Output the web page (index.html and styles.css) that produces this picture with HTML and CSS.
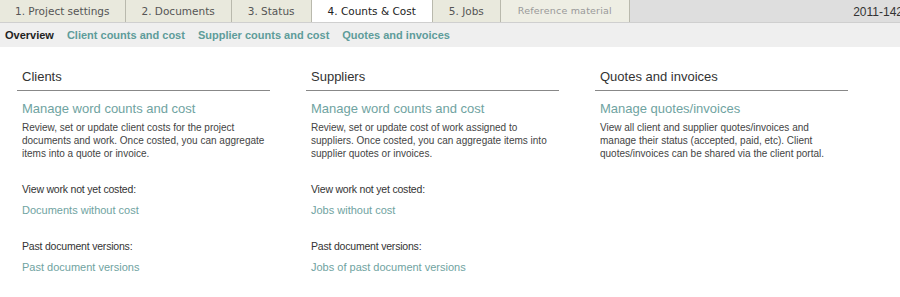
FILE: index.html
```html
<!DOCTYPE html>
<html lang="en">
<head>
    <meta charset="UTF-8">
    <title>Counts &amp; Cost</title>
    <link rel="stylesheet" href="styles.css">
</head>
<body>
    <header class="tabbar">
        <nav class="tabs">
            <a class="tab" href="#">1. Project settings</a>
            <a class="tab" href="#">2. Documents</a>
            <a class="tab" href="#">3. Status</a>
            <a class="tab active" href="#">4. Counts &amp; Cost</a>
            <a class="tab" href="#">5. Jobs</a>
            <a class="tab ref" href="#">Reference material</a>
        </nav>
        <span class="proj">2011-142</span>
    </header>

    <nav class="subnav">
        <a class="current" href="#">Overview</a>
        <a href="#">Client counts and cost</a>
        <a href="#">Supplier counts and cost</a>
        <a href="#">Quotes and invoices</a>
    </nav>

    <main class="cols">
        <section class="col">
            <h2>Clients</h2>
            <a class="big" href="#">Manage word counts and cost</a>
            <p class="desc">Review, set or update client costs for the project documents and work. Once costed, you can aggregate items into a quote or invoice.</p>
            <div class="label">View work not yet costed:</div>
            <a class="small" href="#">Documents without cost</a>
            <div class="label">Past document versions:</div>
            <a class="small" href="#">Past document versions</a>
        </section>

        <section class="col">
            <h2>Suppliers</h2>
            <a class="big" href="#">Manage word counts and cost</a>
            <p class="desc">Review, set or update cost of work assigned to suppliers. Once costed, you can aggregate items into supplier quotes or invoices.</p>
            <div class="label">View work not yet costed:</div>
            <a class="small" href="#">Jobs without cost</a>
            <div class="label">Past document versions:</div>
            <a class="small" href="#">Jobs of past document versions</a>
        </section>

        <section class="col">
            <h2>Quotes and invoices</h2>
            <a class="big" href="#">Manage quotes/invoices</a>
            <p class="desc narrow">View all client and supplier quotes/invoices and manage their status (accepted, paid, etc). Client quotes/invoices can be shared via the client portal.</p>
        </section>
    </main>
</body>
</html>
```

FILE: styles.css
```css
body {
    margin: 0;
    font-family: Arial, 'Liberation Sans', Helvetica, sans-serif;
    color: #333;
    background: #fff;
}

a {
    text-decoration: none;
}

.tabbar {
    display: flex;
    align-items: stretch;
    height: 23px;
    background: #dedede;
    border-bottom: 1px solid #cfcfcf;
    box-sizing: border-box;
    overflow: hidden;
}

.tabs {
    display: flex;
}

.tab {
    font-family: 'DejaVu Sans', Verdana, sans-serif;
    font-size: 10.5px;
    color: #555;
    background: #e9e9dd;
    border-right: 1px solid #b9b9ad;
    padding: 0 16px;
    line-height: 22px;
    height: 23px;
    box-sizing: border-box;
}

.tab:first-child {
    padding: 0 15px;
}

.tab.active {
    background: #fff;
    color: #222;
    height: 24px;
    position: relative;
    z-index: 1;
}

.tab.ref {
    font-size: 9.5px;
    color: #999;
    background: #eeeee4;
    padding: 0 17px;
    letter-spacing: 0.2px;
}

.proj {
    margin-left: auto;
    font-size: 12px;
    color: #333;
    line-height: 24px;
    margin-right: -3px;
}

.subnav {
    display: flex;
    gap: 13px;
    height: 24px;
    padding: 0 5px;
    background: #efefef;
    font-size: 11px;
    font-weight: bold;
    line-height: 24px;
}

.subnav a {
    color: #5e9c9a;
}

.subnav a.current {
    color: #222;
}

.cols {
    display: grid;
    grid-template-columns: 289px 289px 253px;
    padding: 22px 0 0 17px;
}

.col {
    width: 253px;
}

.col h2 {
    margin: 0 0 9px;
    padding: 0 0 5px 5px;
    font-size: 13px;
    line-height: 16px;
    font-weight: normal;
    color: #333;
    border-bottom: 1px solid #888;
}

.big {
    display: block;
    padding-left: 5px;
    font-size: 13px;
    color: #6fa3a1;
    line-height: 17px;
}

.desc {
    margin: 4px 0 22px;
    padding-left: 5px;
    font-size: 10px;
    line-height: 13px;
    color: #444;
}

.desc.narrow {
    padding-right: 12px;
}

.label {
    padding-left: 5px;
    font-size: 10.5px;
    line-height: 14px;
    color: #333;
    letter-spacing: -0.2px;
}

.small {
    display: block;
    margin: 7px 0 22px;
    padding-left: 5px;
    font-size: 11px;
    line-height: 14px;
    color: #6fa3a1;
}
```
